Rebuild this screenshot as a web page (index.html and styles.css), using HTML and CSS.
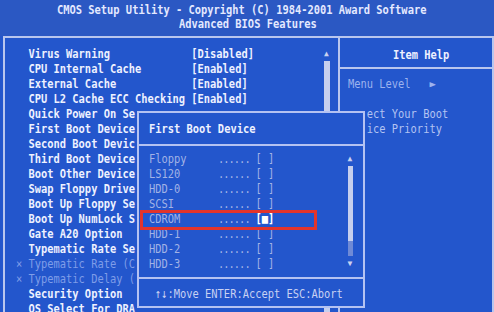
FILE: index.html
```html
<!DOCTYPE html>
<html>
<head>
<title>Advanced BIOS Features</title>
<link rel="stylesheet" href="styles.css">
</head>
<body>
<div class="screen">

<div class="head">
 <div class="t t1">CMOS Setup Utility - Copyright (C) 1984-2001 Award Software</div>
 <div class="t t2">Advanced BIOS Features</div>
</div>

<div class="frame">
 <div class="settings">
  <div class="rows">
   <div class="row"><span class="mk"></span><span class="lbl">Virus Warning</span><span>[Disabled]</span></div>
   <div class="row"><span class="mk"></span><span class="lbl">CPU Internal Cache</span><span>[Enabled]</span></div>
   <div class="row"><span class="mk"></span><span class="lbl">External Cache</span><span>[Enabled]</span></div>
   <div class="row"><span class="mk"></span><span class="lbl">CPU L2 Cache ECC Checking</span><span>[Enabled]</span></div>
   <div class="row"><span class="mk"></span><span class="lbl">Quick Power On Se</span></div>
   <div class="row"><span class="mk"></span><span class="lbl">First Boot Device</span></div>
   <div class="row"><span class="mk"></span><span class="lbl">Second Boot Devic</span></div>
   <div class="row"><span class="mk"></span><span class="lbl">Third Boot Device</span></div>
   <div class="row"><span class="mk"></span><span class="lbl">Boot Other Device</span></div>
   <div class="row"><span class="mk"></span><span class="lbl">Swap Floppy Drive</span></div>
   <div class="row"><span class="mk"></span><span class="lbl">Boot Up Floppy Se</span></div>
   <div class="row"><span class="mk"></span><span class="lbl">Boot Up NumLock S</span></div>
   <div class="row"><span class="mk"></span><span class="lbl">Gate A20 Option</span></div>
   <div class="row"><span class="mk"></span><span class="lbl">Typematic Rate Se</span></div>
   <div class="row dim"><span class="mk">×</span><span class="lbl">Typematic Rate (C</span></div>
   <div class="row dim"><span class="mk">×</span><span class="lbl">Typematic Delay (</span></div>
   <div class="row"><span class="mk"></span><span class="lbl">Security Option</span></div>
   <div class="row"><span class="mk"></span><span class="lbl">OS Select For DRA</span></div>
  </div>
  <div class="sbar">
   <span class="arr">▲</span>
   <span class="thumb"></span>
  </div>
 </div>

 <div class="help">
  <div class="help-title"><div class="t">Item Help</div></div>
  <div class="help-body">
   <div class="t hl">Menu Level   ►</div>
   <div class="t hl"> </div>
   <div class="t hs">   ect Your Boot</div>
   <div class="t hs">   ice Priority</div>
  </div>
 </div>
</div>

<div class="popup">
 <div class="ptitle"><div class="t">First Boot Device</div></div>
 <div class="pbody">
  <div class="plist">
   <div class="t item">Floppy     <span class="dots">......</span>[ ]</div>
   <div class="t item">LS120      <span class="dots">......</span>[ ]</div>
   <div class="t item">HDD-0      <span class="dots">......</span>[ ]</div>
   <div class="t item">SCSI       <span class="dots">......</span>[ ]</div>
   <div class="t item">CDROM      <span class="dots">......</span><span class="sel">[■]</span></div>
   <div class="t item">HDD-1      <span class="dots">......</span>[ ]</div>
   <div class="t item">HDD-2      <span class="dots">......</span>[ ]</div>
   <div class="t item">HDD-3      <span class="dots">......</span>[ ]</div>
  </div>
  <div class="psbar">
   <span class="arr">▲</span>
   <span class="pthumb"></span>
   <span class="ptrack"></span>
   <span class="arr">▼</span>
  </div>
 </div>
 <div class="pfoot"><div class="t">↑↓:Move ENTER:Accept ESC:Abort</div></div>
 <div class="mark"></div>
</div>

</div>
</body>
</html>
```

FILE: styles.css
```css
html, body {
 margin: 0;
 padding: 0;
 width: 494px;
 height: 312px;
 overflow: hidden;
 background: #2356cc;
}
.screen {
 position: relative;
 width: 494px;
 height: 312px;
 overflow: hidden;
 font-family: "DejaVu Sans Mono", "Liberation Mono", monospace;
 font-size: 13px;
 font-weight: bold;
 line-height: 15px;
 color: #eef1ff;
}
/* text is drawn in a tall narrow cell like the VGA font */
.t, .row {
 white-space: pre;
 transform: scaleX(0.8);
 transform-origin: 0 50%;
}

.head {
 height: 36px;
 padding-top: 3px;
 box-sizing: border-box;
 background: #2b58c3;
 line-height: 14px;
 color: #e4e9ff;
}
.t1 { margin-left: 57px; }
.t2 { margin-left: 179px; }

.frame {
 display: flex;
 margin-left: 3px;
 width: 487px;
 height: 290px;
 border: 2px solid #b9c6ee;
 border-bottom: 0;
}
.settings {
 display: flex;
 width: 333px;
 border-right: 2px solid #b9c6ee;
}
.rows {
 flex: 1;
 padding: 8px 0 0 11px;
}
.row { display: flex; }
.row .mk { width: 2ch; }
.row .lbl { width: 26ch; }
.row.dim {
 color: #7f9de8;
 font-weight: normal;
}
.sbar {
 display: flex;
 flex-direction: column;
 align-items: center;
 width: 7px;
 margin-right: 8px;
 padding-top: 8px;
}
.arr {
 font-size: 8px;
 line-height: 15px;
 color: #c9d2f0;
}
.thumb {
 width: 6px;
 flex: 1;
 background: #c6cfee;
}

.help {
 flex: 1;
}
.help-title {
 padding: 9px 0 5px 53px;
 border-bottom: 2px solid #b9c6ee;
}
.help-body {
 padding: 7px 0 0 8px;
}
.hl { color: #9db3ee; font-weight: normal; }
.hs { color: #b3c3f2; font-weight: normal; }

.popup {
 position: absolute;
 z-index: 2;
 left: 137px;
 top: 111px;
 width: 228px;
 height: 197px;
 box-sizing: border-box;
 border: 2px solid #b4c2f2;
 background: #2356cc;
}
.ptitle {
 padding: 8px 0 8px 10px;
 border-bottom: 2px solid #b4c2f2;
}
.pbody {
 display: flex;
 padding: 5px 10px 6px 10px;
 border-bottom: 2px solid #b4c2f2;
}
.plist { flex: 1; }
.item {
 color: #a2b3e6;
 font-weight: normal;
}
.item .dots {
 display: inline-block;
 width: 6ch;
 letter-spacing: -1.2px;
}
.item .sel {
 color: #ffffff;
 font-weight: bold;
}
.psbar {
 display: flex;
 flex-direction: column;
 align-items: center;
 width: 6px;
}
.pthumb {
 width: 5px;
 height: 75px;
 background: #c6cfee;
}
.ptrack {
 width: 5px;
 height: 15px;
 background: #6f8ad6;
}
.pfoot {
 padding: 7px 0 0 16px;
 color: #c8d1f2;
 font-weight: normal;
}
.mark {
 position: absolute;
 left: 1px;
 top: 97px;
 width: 177px;
 height: 20px;
 box-sizing: border-box;
 border: 3px solid #e2342c;
}
```
